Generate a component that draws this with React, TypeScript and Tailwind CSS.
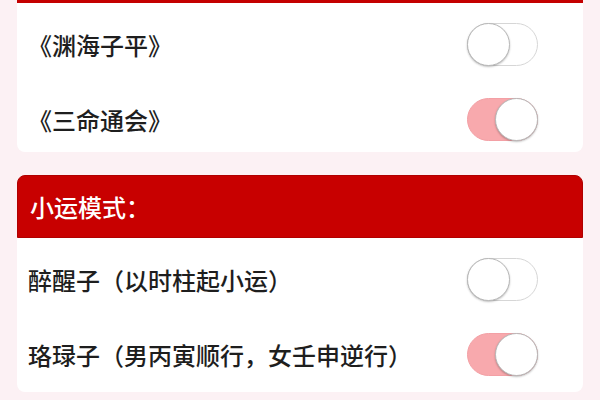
import { useState } from "react";

type Item = { label: string; on: boolean };

const classics: Item[] = [
  { label: "《渊海子平》", on: false },
  { label: "《三命通会》", on: true },
];

const xiaoyun: Item[] = [
  { label: "醉醒子（以时柱起小运）", on: false },
  { label: "珞琭子（男丙寅顺行，女壬申逆行）", on: true },
];

function Toggle({ on, onClick }: { on: boolean; onClick: () => void }) {
  return (
    <button
      onClick={onClick}
      className={
        "relative w-[71px] h-[43px] rounded-full border flex-shrink-0 " +
        (on ? "bg-[#f8a9ad] border-[#f3a0a5]" : "bg-white border-[#d6d6d6]")
      }
    >
      <span
        className={
          "absolute top-[-1px] w-[43px] h-[43px] rounded-full bg-white border-[1.5px] border-[#b8b8b8] shadow-[0_1px_2px_rgba(0,0,0,0.25)] " +
          (on ? "right-[-1px]" : "left-[-1px]")
        }
      />
    </button>
  );
}

function Row({ item, onToggle }: { item: Item; onToggle: () => void }) {
  return (
    <div className="h-[75px] shrink-0 flex items-center justify-between pl-[11px] pr-[45px]">
      <span className="text-[24px] font-medium text-[#1e1e1e]">{item.label}</span>
      <Toggle on={item.on} onClick={onToggle} />
    </div>
  );
}

function useItems(initial: Item[]) {
  const [items, setItems] = useState(initial);
  const toggle = (i: number) =>
    setItems((prev) => prev.map((it, j) => (j === i ? { ...it, on: !it.on } : it)));
  return [items, toggle] as const;
}

export default function App() {
  const [top, toggleTop] = useItems(classics);
  const [bottom, toggleBottom] = useItems(xiaoyun);

  return (
    <div
      className="w-[600px] h-[400px] overflow-hidden bg-[#fcf1f4] px-[17px]"
      style={{ fontFamily: '"Noto Sans CJK SC", "Noto Sans", sans-serif' }}
    >
      {/* previous section, header scrolled off */}
      <div className="bg-white rounded-b-lg h-[152px] overflow-hidden">
        <div className="h-[3px] bg-[#c40000]" />
        <div className="pt-[4px]">
          {top.map((item, i) => (
            <Row key={i} item={item} onToggle={() => toggleTop(i)} />
          ))}
        </div>
      </div>

      {/* 小运模式 */}
      <div className="mt-[23px] bg-white rounded-lg">
        <div className="h-[63px] bg-[#c80000] rounded-t-lg border border-[#b00000] flex items-center pl-[12px]">
          <span className="text-[24px] font-medium text-white">小运模式：</span>
        </div>
        <div className="pt-[4px]">
          {bottom.map((item, i) => (
            <Row key={i} item={item} onToggle={() => toggleBottom(i)} />
          ))}
        </div>
      </div>
    </div>
  );
}
